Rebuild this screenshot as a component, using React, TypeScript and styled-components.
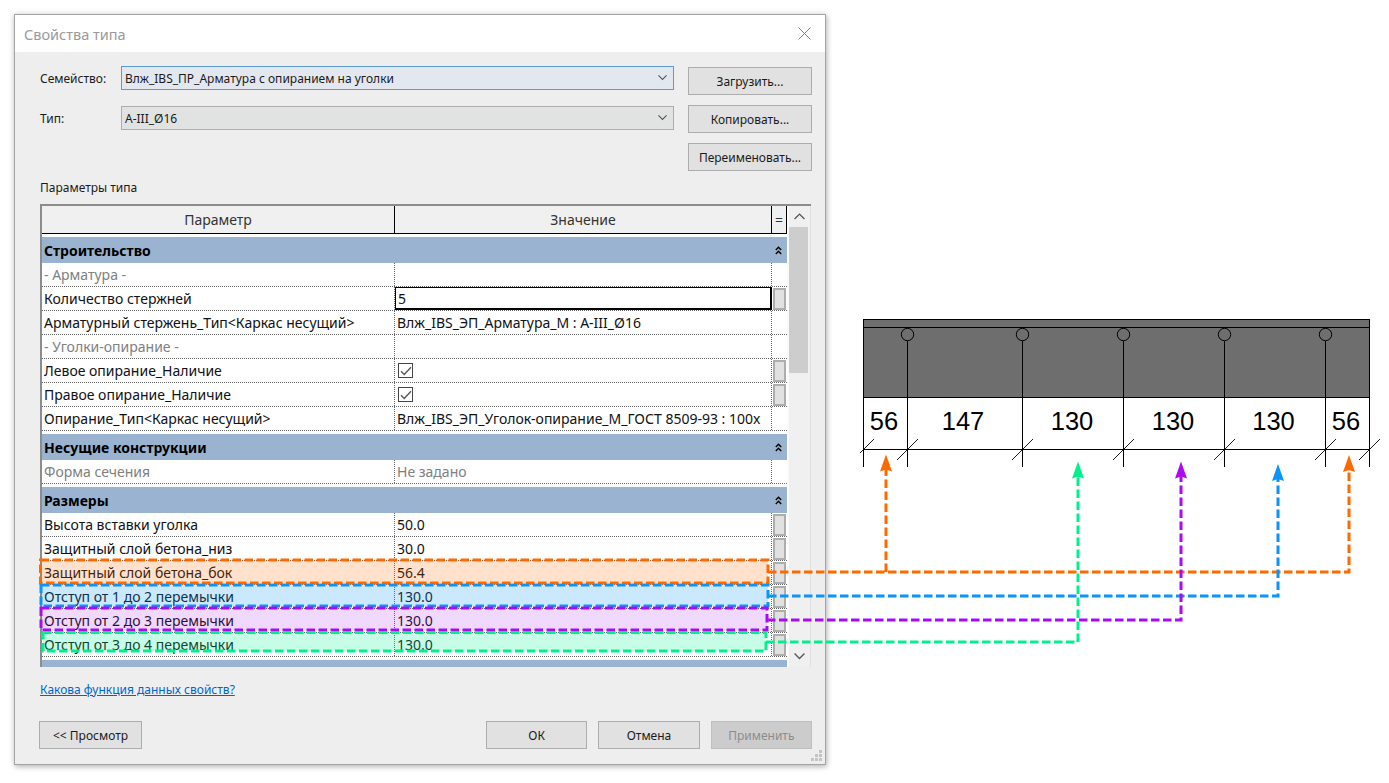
import React from "react";
import styled, { createGlobalStyle } from "styled-components";

const GlobalStyle = createGlobalStyle`
  html, body { margin: 0; padding: 0; background: #fff; }
  body { font-family: "Noto Sans", "Open Sans", sans-serif; color: #1a1a1a; }
`;

const Page = styled.div`
  position: relative;
  display: flex;
  align-items: flex-start;
  width: 1389px;
  height: 783px;
  padding: 14px 0 0 14px;
  box-sizing: border-box;
  overflow: hidden;
`;

const Dialog = styled.div`
  position: relative;
  flex: none;
  display: flex;
  flex-direction: column;
  width: 812px;
  height: 751px;
  box-sizing: border-box;
  background: #eeeeee;
  border: 1px solid #a3a3a3;
  box-shadow: 1px 2px 5px rgba(0, 0, 0, 0.22), 0 0 7px rgba(0, 0, 0, 0.12);
`;

const TitleBar = styled.div`
  display: flex;
  align-items: center;
  justify-content: space-between;
  height: 37px;
  padding: 0 14px 0 9px;
  background: #fff;
  flex: none;
`;

const Title = styled.span`
  font-size: 14.5px;
  color: #9a9a9a;
`;

const Body = styled.div`
  flex: 1;
  display: flex;
  flex-direction: column;
  padding: 14px 13px 15px 25px;
  min-height: 0;
`;

const Head = styled.div`
  display: flex;
  gap: 14px;
`;

const Fields = styled.div`
  flex: 1;
  display: flex;
  flex-direction: column;
  gap: 16px;
`;

const Field = styled.div`
  display: flex;
  align-items: center;
`;

const FieldLabel = styled.label`
  width: 81px;
  font-size: 12px;
`;

const Combo = styled.div<{ $focus?: boolean }>`
  flex: 1;
  display: flex;
  align-items: center;
  justify-content: space-between;
  height: 24px;
  box-sizing: border-box;
  padding: 0 6px 0 3px;
  font-size: 12px;
  background: ${(p) => (p.$focus ? "#e3e8f0" : "#e1e3e3")};
  border: 1px solid ${(p) => (p.$focus ? "#5b9bd0" : "#adadad")};
`;

const SideButtons = styled.div`
  flex: none;
  display: flex;
  flex-direction: column;
  gap: 10px;
  width: 124px;
  margin-top: 1px;
`;

const Button = styled.button<{ $disabled?: boolean }>`
  width: ${(p) => p.$disabled ? "103px" : "auto"};
  height: 28px;
  padding: 0;
  box-sizing: border-box;
  font-family: inherit;
  font-size: 12px;
  color: ${(p) => (p.$disabled ? "#8c8c8c" : "#1a1a1a")};
  background: ${(p) => (p.$disabled ? "#cccccc" : "#e1e1e1")};
  border: 1px solid ${(p) => (p.$disabled ? "#bfbfbf" : "#adadad")};
`;

const FooterButton = styled(Button)`
  width: 103px;
`;

const Caption = styled.div`
  margin: 9px 0 8px;
  font-size: 12px;
  line-height: 16px;
`;

const Table = styled.div`
  flex: none;
  display: flex;
  width: 771px;
  height: 463px;
  box-sizing: border-box;
  background: #fff;
  border-top: 2px solid #8c8c8c;
  border-left: 2px solid #8c8c8c;
  overflow: hidden;
`;

const TableMain = styled.div`
  width: 745px;
  flex: none;
  overflow: hidden;
`;

const HeaderRow = styled.div`
  display: grid;
  grid-template-columns: 353px 377px 15px;
  height: 28px;
  box-sizing: border-box;
  background: #f0f0f0;
  border-bottom: 1px solid #000;
`;

const HeaderCell = styled.div`
  display: flex;
  align-items: center;
  justify-content: center;
  font-size: 14px;
  color: #333;
  border-right: 1px solid #000;
`;

const GroupRow = styled.div`
  display: flex;
  align-items: center;
  justify-content: space-between;
  height: 26px;
  flex: none;
  margin-top: 3px;
  padding: 0 5px 0 2px;
  background: #99b3d0;
  font-size: 14px;
  font-weight: 700;
  color: #000;
`;

const Row = styled.div<{ $muted?: boolean }>`
  display: grid;
  grid-template-columns: 353px 377px 15px;
  height: 24px;
  box-sizing: border-box;
  border-bottom: 1px dotted #666;
  font-size: 14px;
  color: ${(p) => (p.$muted ? "#808080" : "#111")};
`;

const Cell = styled.div`
  display: flex;
  align-items: center;
  padding-left: 2px;
  white-space: nowrap;
  overflow: hidden;
  border-right: 1px dotted #666;
`;

const ValueCell = styled(Cell)`
  padding-left: 2px;
`;

const InputCell = styled.div`
  display: flex;
  align-items: center;
  padding-left: 2px;
  margin-left: 0;
  box-sizing: border-box;
  border: 2px solid #000;
  border-width: 1.5px 2px 2px 1.5px;
  background: #fff;
`;

const PickCell = styled.div`
  display: flex;
  justify-content: center;
  align-items: center;
`;

const Pick = styled.div`
  width: 13px;
  height: 22px;
  box-sizing: border-box;
  background: #e1e1e1;
  border: 2px solid #adadad;
`;

const CheckBox = styled.div`
  display: flex;
  align-items: center;
  justify-content: center;
  width: 15px;
  height: 15px;
  margin-left: 1px;
  box-sizing: border-box;
  border: 1px solid #444;
  background: #fff;
`;

const ScrollBar = styled.div`
  flex: none;
  display: flex;
  flex-direction: column;
  width: 24px;
  box-sizing: border-box;
  background: #f0f0f0;
  border-right: 1px solid #e0e0e0;
  border-left: 2px solid #fafafa;
`;

const ScrollArrow = styled.div`
  height: 21px;
  flex: none;
  display: flex;
  align-items: center;
  justify-content: center;
`;

const ScrollThumb = styled.div`
  width: 19px;
  height: 146px;
  flex: none;
  background: #cdcdcd;
`;

const ScrollSpace = styled.div`
  flex: 1;
`;

const Link = styled.a`
  margin-top: 15px;
  align-self: flex-start;
  font-size: 12px;
  line-height: 16px;
  color: #0066cc;
  text-decoration: underline;
`;

const Footer = styled.div`
  margin-top: auto;
  display: flex;
  gap: 11px;
  padding-left: 446px;
  position: relative;
`;

const PreviewButton = styled(FooterButton)`
  position: absolute;
  left: -1px;
  top: 0;
`;

const Grip = styled.svg`
  position: absolute;
  right: 2px;
  bottom: 2px;
`;

const Drawing = styled.svg`
  flex: none;
  margin: 301px 0 0 34px;
`;

const DimText = styled.text`
  font-family: "Liberation Sans", Arial, sans-serif;
  font-size: 25.5px;
  fill: #000;
  text-anchor: middle;
`;

const Annotations = styled.svg`
  position: absolute;
  left: 0;
  top: 0;
  pointer-events: none;
`;

const Chevron = ({ up, size = 9, color = "#555" }: { up?: boolean; size?: number; color?: string }) => (
  <svg width={size} height={size * 0.6} viewBox="0 0 10 6" fill="none">
    <path d={up ? "M0.5 5.5L5 1L9.5 5.5" : "M0.5 0.5L5 5L9.5 0.5"} stroke={color} strokeWidth="1.2" />
  </svg>
);

const Collapse = () => (
  <svg width="7" height="9" viewBox="0 0 7 9" fill="none">
    <path d="M0.8 4L3.5 1.2L6.2 4M0.8 8L3.5 5.2L6.2 8" stroke="#000" strokeWidth="1.4" />
  </svg>
);

const Check = () => (
  <svg width="12" height="10" viewBox="0 0 12 10" fill="none">
    <path d="M1 5.2L4.2 8.5L11 1.2" stroke="#555" strokeWidth="1.3" />
  </svg>
);

const Param = ({
  name,
  value,
  muted,
  pick,
  check,
  input,
}: {
  name: string;
  value?: string;
  muted?: boolean;
  pick?: boolean;
  check?: boolean;
  input?: boolean;
}) => (
  <Row $muted={muted}>
    <Cell>{name}</Cell>
    {input ? (
      <InputCell>{value}</InputCell>
    ) : (
      <ValueCell>
        {check ? (
          <CheckBox>
            <Check />
          </CheckBox>
        ) : (
          value
        )}
      </ValueCell>
    )}
    <PickCell>{pick && <Pick />}</PickCell>
  </Row>
);

const Group = ({ name }: { name: string }) => (
  <GroupRow>
    {name}
    <Collapse />
  </GroupRow>
);

// drawing origin on the page is (860, 315)
const ox = 860;
const oy = 315;
const bars = [863.5, 907.5, 1022.5, 1123.5, 1224.5, 1325.5, 1369.5];
const rebars = bars.slice(1, 6);
const dims = [
  { x: 884, t: "56" },
  { x: 963, t: "147" },
  { x: 1072, t: "130" },
  { x: 1173, t: "130" },
  { x: 1273.5, t: "130" },
  { x: 1346, t: "56" },
];

const BeamDrawing = () => (
  <svg width="0" height="0" />
);

const Section = () => (
  <Drawing width="520" height="160" viewBox="0 0 520 160">
    <rect x={863.5 - ox} y={319.5 - oy} width={506} height={78} fill="#6e6e6e" stroke="#000" />
    <line x1={863.5 - ox} x2={1369.5 - ox} y1={327.5 - oy} y2={327.5 - oy} stroke="#000" />
    <line x1={863.5 - ox} x2={1369.5 - ox} y1={449.5 - oy} y2={449.5 - oy} stroke="#000" />
    {[bars[0], bars[6]].map((x) => (
      <line key={x} x1={x - ox} x2={x - ox} y1={319.5 - oy} y2={467 - oy} stroke="#000" />
    ))}
    {rebars.map((x) => (
      <g key={x} fill="none" stroke="#000">
        <circle cx={x - ox} cy={334.5 - oy} r="6.2" />
        <line x1={x - ox} x2={x - ox} y1={341 - oy} y2={467 - oy} />
      </g>
    ))}
    {bars.map((x) => (
      <line key={x} x1={x - 10.5 - ox} x2={x + 10.5 - ox} y1={460 - oy} y2={439 - oy} stroke="#000" strokeWidth="0.9" />
    ))}
    {dims.map((d) => (
      <DimText key={d.x} x={d.x - ox} y={429.5 - oy}>
        {d.t}
      </DimText>
    ))}
  </Drawing>
);

const Arrow = ({ x, y, color }: { x: number; y: number; color: string }) => (
  <path d={`M${x} ${y}L${x + 6} ${y + 17}L${x + 1.5} ${y + 15.5}H${x - 1.5}L${x - 6} ${y + 17}Z`} fill={color} />
);

const marks = [
  { color: "#ff6a00", opacity: 0.2, box: [40.5, 560, 768, 583], path: "M768 572H1349V470M886 572V470", arrows: [[886, 454.5], [1349, 455]] },
  { color: "#0d94fa", opacity: 0.22, box: [41, 585, 768, 606], path: "M768 596H1278V478", arrows: [[1278, 464]] },
  { color: "#a90bf5", opacity: 0.16, box: [41, 608, 767, 630], path: "M767 620H1181V476", arrows: [[1181, 461.5]] },
  { color: "#00f08e", opacity: 0.22, box: [43, 632.5, 766, 651], path: "M766 642H1078V476", arrows: [[1078, 461.5]] },
];

const Overlay = () => (
  <Annotations width="1389" height="783" viewBox="0 0 1389 783" fill="none">
    {marks.map((m) => (
      <g key={m.color}>
        <rect
          x={m.box[0]}
          y={m.box[1]}
          width={m.box[2] - m.box[0]}
          height={m.box[3] - m.box[1]}
          fill={m.color}
          fillOpacity={m.opacity}
          stroke={m.color}
          strokeWidth="3"
          strokeDasharray="8.5 3.5"
        />
        <path d={m.path} stroke={m.color} strokeWidth="3" strokeDasharray="8.5 3.5" />
        {m.arrows.map(([x, y]) => (
          <Arrow key={x} x={x} y={y} color={m.color} />
        ))}
      </g>
    ))}
  </Annotations>
);

export default function App() {
  return (
    <>
      <GlobalStyle />
      <Page>
        <Dialog>
          <TitleBar>
            <Title>Свойства типа</Title>
            <svg width="13" height="13" viewBox="0 0 13 13" fill="none">
              <path d="M0.5 0.5L12.5 12.5M12.5 0.5L0.5 12.5" stroke="#808080" />
            </svg>
          </TitleBar>
          <Body>
            <Head>
              <Fields>
                <Field>
                  <FieldLabel>Семейство:</FieldLabel>
                  <Combo $focus>
                    Влж_IBS_ПР_Арматура с опиранием на уголки
                    <Chevron />
                  </Combo>
                </Field>
                <Field>
                  <FieldLabel>Тип:</FieldLabel>
                  <Combo>
                    А-III_Ø16
                    <Chevron />
                  </Combo>
                </Field>
              </Fields>
              <SideButtons>
                <Button>Загрузить...</Button>
                <Button>Копировать...</Button>
                <Button>Переименовать...</Button>
              </SideButtons>
            </Head>
            <Caption>Параметры типа</Caption>
            <Table>
              <TableMain>
                <HeaderRow>
                  <HeaderCell>Параметр</HeaderCell>
                  <HeaderCell>Значение</HeaderCell>
                  <HeaderCell>=</HeaderCell>
                </HeaderRow>
                <Group name="Строительство" />
                <Param name="- Арматура -" muted />
                <Param name="Количество стержней" value="5" input pick />
                <Param name="Арматурный стержень_Тип<Каркас несущий>" value="Влж_IBS_ЭП_Арматура_М : А-III_Ø16" />
                <Param name="- Уголки-опирание -" muted />
                <Param name="Левое опирание_Наличие" check pick />
                <Param name="Правое опирание_Наличие" check pick />
                <Param name="Опирание_Тип<Каркас несущий>" value="Влж_IBS_ЭП_Уголок-опирание_М_ГОСТ 8509-93 : 100x" />
                <Group name="Несущие конструкции" />
                <Param name="Форма сечения" value="Не задано" muted />
                <Group name="Размеры" />
                <Param name="Высота вставки уголка" value="50.0" pick />
                <Param name="Защитный слой бетона_низ" value="30.0" pick />
                <Param name="Защитный слой бетона_бок" value="56.4" pick />
                <Param name="Отступ от 1 до 2 перемычки" value="130.0" pick />
                <Param name="Отступ от 2 до 3 перемычки" value="130.0" pick />
                <Param name="Отступ от 3 до 4 перемычки" value="130.0" pick />
                <Group name="" />
              </TableMain>
              <ScrollBar>
                <ScrollArrow>
                  <Chevron up size={11} />
                </ScrollArrow>
                <ScrollThumb />
                <ScrollSpace />
                <ScrollArrow>
                  <Chevron size={11} />
                </ScrollArrow>
              </ScrollBar>
            </Table>
            <Link href="#">Какова функция данных свойств?</Link>
            <Footer>
              <PreviewButton>&lt;&lt; Просмотр</PreviewButton>
              <FooterButton>ОК</FooterButton>
              <FooterButton>Отмена</FooterButton>
              <Button $disabled>Применить</Button>
            </Footer>
          </Body>
          <Grip width="12" height="12" viewBox="0 0 12 12" fill="#c4c4c4">
            <rect x="8" y="0" width="3" height="3" />
            <rect x="4" y="4" width="3" height="3" />
            <rect x="8" y="4" width="3" height="3" />
            <rect x="0" y="8" width="3" height="3" />
            <rect x="4" y="8" width="3" height="3" />
            <rect x="8" y="8" width="3" height="3" />
          </Grip>
        </Dialog>
        <Section />
        <Overlay />
      </Page>
    </>
  );
}
